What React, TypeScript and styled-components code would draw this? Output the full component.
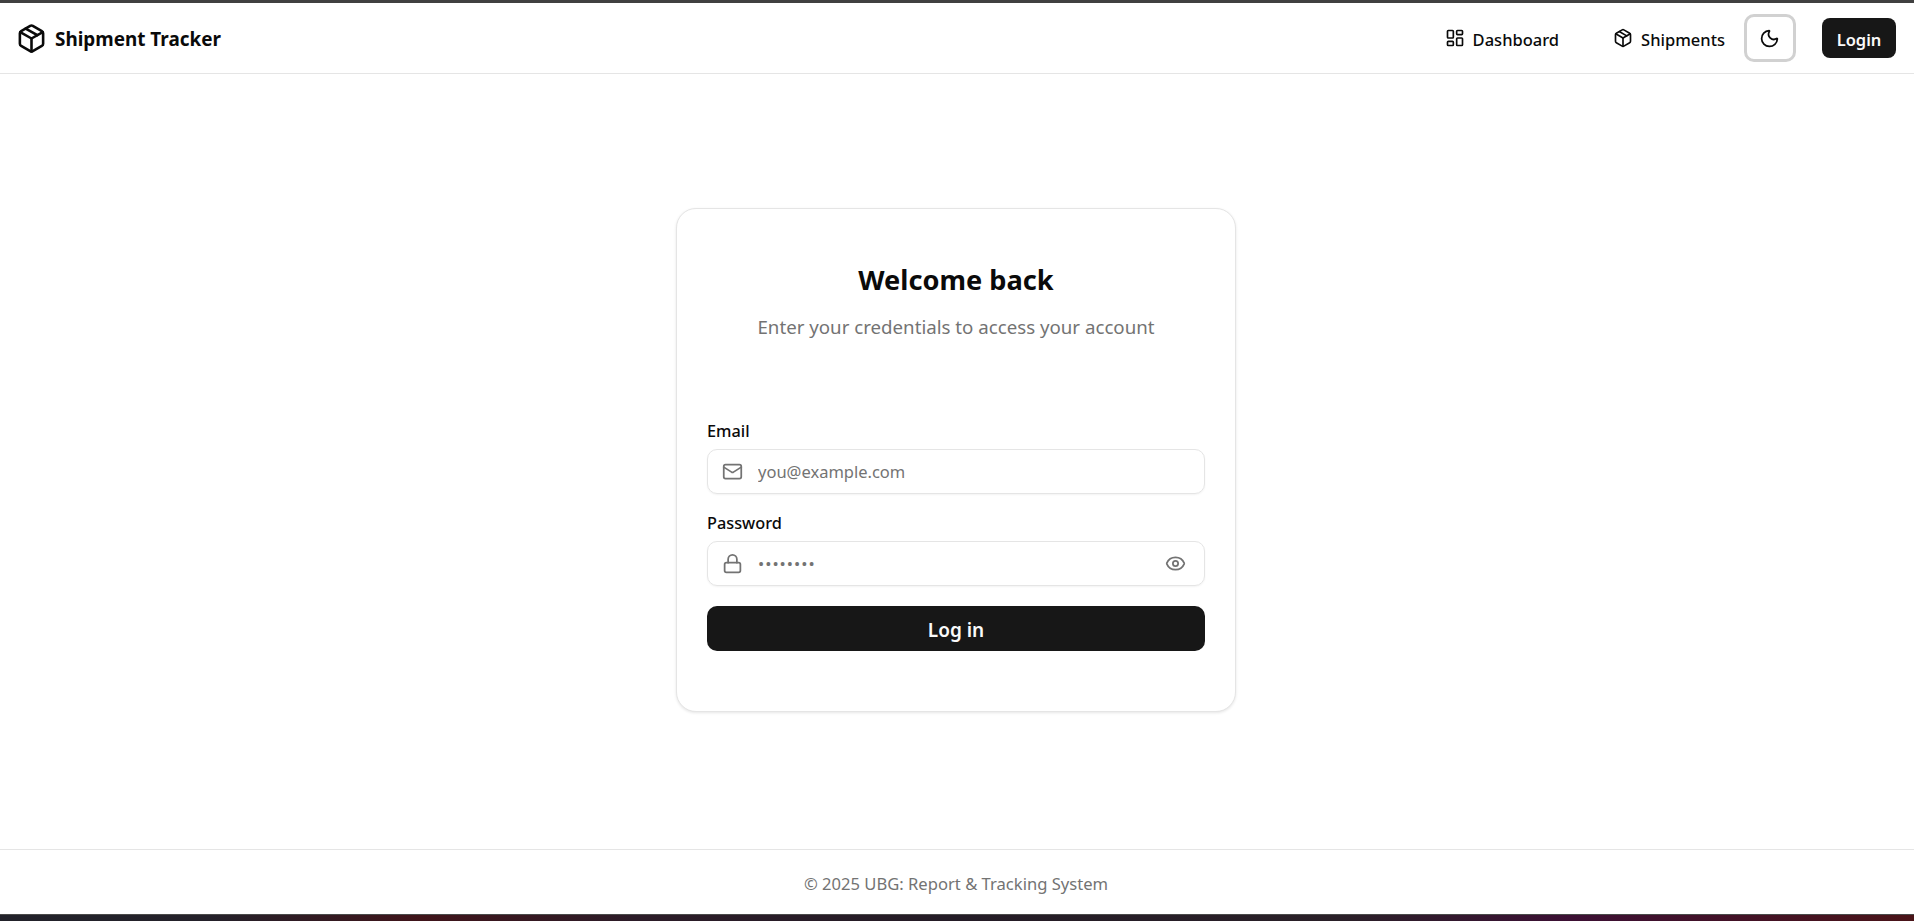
import { Eye, LayoutDashboard, Lock, Mail, Moon, Package } from "lucide-react";
import styled, { createGlobalStyle } from "styled-components";

const GlobalStyle = createGlobalStyle`
  html, body {
    margin: 0;
    background: #fff;
    font-family: "Noto Sans", "Open Sans", sans-serif;
    color: #0a0a0a;
  }
  * {
    box-sizing: border-box;
  }
`;

const Page = styled.div`
  display: flex;
  flex-direction: column;
  height: 921px;
  overflow: hidden;
  border-top: 3px solid #404040;
`;

const Header = styled.header`
  align-items: center;
  border-bottom: 1px solid #e5e5e5;
  display: flex;
  flex: none;
  height: 71px;
  justify-content: space-between;
  padding: 0 18px 0 16px;
`;

const Brand = styled.div`
  align-items: center;
  display: flex;
  font-size: 18.9px;
  font-weight: 700;
  gap: 8px;
`;

const TextNudge = styled.span`
  padding-top: 2px;
`;

const Nav = styled.nav`
  align-items: center;
  display: flex;
`;

const NavLink = styled.a`
  align-items: center;
  display: flex;
  font-size: 16.5px;
  font-weight: 500;
  gap: 8px;
  margin-right: 54px;

  &:nth-child(2) {
    margin-right: 19px;
  }
`;

const ThemeButton = styled.button`
  align-items: center;
  background: #fff;
  border: 3px solid #d1d1d1;
  border-radius: 10px;
  color: #0a0a0a;
  display: flex;
  height: 48px;
  justify-content: center;
  margin-right: 26px;
  padding: 0 1px 0 0;
  width: 52px;
`;

const LoginButton = styled.button`
  background: #171717;
  border: 0;
  border-radius: 8px;
  color: #fafafa;
  font-family: inherit;
  font-size: 16.5px;
  font-weight: 600;
  height: 40px;
  padding: 2px 0 0;
  width: 74px;
`;

const Main = styled.main`
  align-items: flex-start;
  display: flex;
  flex: 1;
  justify-content: center;
  padding: 134px 2px 0 0;
`;

const Card = styled.section`
  background: #fff;
  border: 1px solid #e5e5e5;
  border-radius: 20px;
  box-shadow: 0 1px 3px rgba(0, 0, 0, 0.1);
  height: 504px;
  padding: 53px 30px 0;
  width: 560px;
`;

const Title = styled.h1`
  font-size: 27.2px;
  font-weight: 700;
  line-height: 36px;
  margin: 0 0 14px;
  text-align: center;
`;

const Subtitle = styled.p`
  color: #737373;
  font-size: 18.7px;
  line-height: 30px;
  margin: 0 0 78px;
  text-align: center;
`;

const Field = styled.div`
  margin-bottom: 18px;
`;

const Label = styled.label`
  display: block;
  font-size: 16.3px;
  font-weight: 500;
  line-height: 22px;
  margin-bottom: 7px;
`;

const InputBox = styled.div`
  align-items: center;
  border: 1px solid #e5e5e5;
  border-radius: 10px;
  box-shadow: 0 1px 2px rgba(0, 0, 0, 0.05);
  color: #737373;
  display: flex;
  height: 45px;
  padding: 0 18px 0 14px;
`;

const Input = styled.input<{ $secret?: boolean }>`
  background: transparent;
  border: 0;
  color: #737373;
  flex: 1;
  font-family: inherit;
  font-size: 16.5px;
  letter-spacing: ${(props) => (props.$secret ? "1px" : "0")};
  margin-left: 15px;
  min-width: 0;
  outline: none;
  padding: 0;

  &::placeholder {
    color: #737373;
    opacity: 1;
  }
`;

const SubmitButton = styled.button`
  background: #171717;
  border: 0;
  border-radius: 10px;
  color: #fafafa;
  display: block;
  font-family: inherit;
  font-size: 19px;
  font-weight: 600;
  height: 45px;
  margin-top: 20px;
  padding: 2px 0 0;
  width: 100%;
`;

const Footer = styled.footer`
  align-items: center;
  border-top: 1px solid #e5e5e5;
  color: #737373;
  display: flex;
  flex: none;
  font-size: 16.6px;
  height: 65px;
  justify-content: center;
  padding: 3px 2px 0 0;
`;

const BottomStrip = styled.div`
  background: linear-gradient(
    90deg,
    #22222a 0%,
    #24212a 11%,
    #40141a 22%,
    #2c1c28 33%,
    #241c26 50%,
    #2a2028 70%,
    #3c1034 82%,
    #4a1418 100%
  );
  border-top: 1px solid #4a4a4a;
  flex: none;
  height: 7px;
`;

export default function App() {
  return (
    <>
      <GlobalStyle />
      <Page>
        <Header>
          <Brand>
            <Package size={31} strokeWidth={2} />
            <TextNudge>Shipment Tracker</TextNudge>
          </Brand>
          <Nav>
            <NavLink>
              <LayoutDashboard size={20} strokeWidth={2} />
              <TextNudge>Dashboard</TextNudge>
            </NavLink>
            <NavLink>
              <Package size={20} strokeWidth={2} />
              <TextNudge>Shipments</TextNudge>
            </NavLink>
            <ThemeButton aria-label="Toggle theme">
              <Moon size={21} strokeWidth={2} />
            </ThemeButton>
            <LoginButton>Login</LoginButton>
          </Nav>
        </Header>
        <Main>
          <Card>
            <Title>Welcome back</Title>
            <Subtitle>Enter your credentials to access your account</Subtitle>
            <Field>
              <Label>Email</Label>
              <InputBox>
                <Mail size={21} strokeWidth={2} />
                <Input placeholder="you@example.com" readOnly />
              </InputBox>
            </Field>
            <Field>
              <Label>Password</Label>
              <InputBox>
                <Lock size={21} strokeWidth={2} />
                <Input $secret type="password" value="password" readOnly />
                <Eye size={21} strokeWidth={2} />
              </InputBox>
            </Field>
            <SubmitButton>Log in</SubmitButton>
          </Card>
        </Main>
        <Footer>© 2025 UBG: Report &amp; Tracking System</Footer>
        <BottomStrip />
      </Page>
    </>
  );
}
